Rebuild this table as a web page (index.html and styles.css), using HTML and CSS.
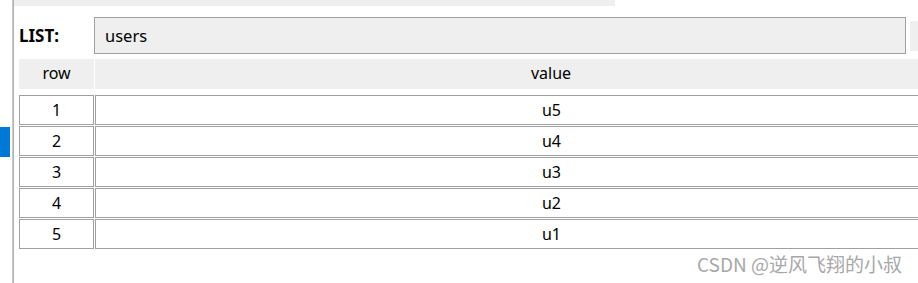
FILE: index.html
```html
<!DOCTYPE html>
<html lang="zh-CN">
<head>
  <meta charset="UTF-8">
  <title>LIST viewer</title>
  <meta name="viewport" content="width=device-width, initial-scale=1.0" />
  <link rel="stylesheet" href="styles.css">
</head>
<body>
  <div class="frame">
    <div class="gutter"><div class="marker"></div></div>
    <div class="divider"></div>
    <div class="panel">
      <div class="topbar"></div>

      <div class="keyrow">
        <label class="keylabel" for="keyName">LIST:</label>
        <div class="keyinput" id="keyName">users</div>
        <div class="keyside"></div>
      </div>

      <div class="grid head">
        <div class="hcell">row</div>
        <div class="hcell wide">value</div>
      </div>

      <div class="grid body">
        <div class="cell">1</div><div class="cell wide">u5</div>
        <div class="cell">2</div><div class="cell wide">u4</div>
        <div class="cell">3</div><div class="cell wide">u3</div>
        <div class="cell">4</div><div class="cell wide">u2</div>
        <div class="cell">5</div><div class="cell wide">u1</div>
      </div>
    </div>
  </div>
  <div class="watermark">CSDN @逆风飞翔的小叔</div>
</body>
</html>
```

FILE: styles.css
```css
body {
  margin: 0;
  padding: 0;
  background: #ffffff;
  color: #000;
  font-family: 'Noto Sans', 'Open Sans', sans-serif;
  font-size: 16px;
  height: 283px;
  overflow: hidden;
  position: relative;
}

.frame {
  display: flex;
  height: 283px;
}

.gutter {
  width: 12px;
  flex: none;
}

.marker {
  margin-top: 127px;
  width: 10px;
  height: 30px;
  background: #0078d7;
}

.divider {
  width: 2px;
  flex: none;
  background: linear-gradient(90deg, #d2d2d2, #a8a8a8);
}

.panel {
  flex: 1;
  min-width: 0;
  overflow: hidden;
}

.topbar {
  width: 601px;
  height: 6px;
  background: #efefef;
}

/* key name row */
.keyrow {
  display: flex;
  align-items: flex-start;
  height: 37px;
  margin-top: 11px;
  padding-left: 5px;
}

.keylabel {
  width: 75px;
  flex: none;
  font-weight: bold;
  font-size: 17px;
  line-height: 37px;
}

.keyinput {
  width: 800px;
  height: 35px;
  flex: none;
  border: 1px solid #a0a0a0;
  background: #efefef;
  padding-left: 10px;
  line-height: 35px;
  font-size: 16.5px;
}

.keyside {
  flex: 1;
  margin: 4px 0 0 4px;
  height: 30px;
  background: #efefef;
}

/* table: the value column runs on past the right edge, so its
   text is pushed right to stay centred on the full column */
.grid {
  display: grid;
  grid-template-columns: 75px 1fr;
  column-gap: 1px;
  row-gap: 1px;
  margin-left: 5px;
}

.head {
  margin-top: 5px;
}

.body {
  margin-top: 6px;
}

.hcell {
  height: 30px;
  line-height: 29px;
  background: #efefef;
  text-align: center;
}

.cell {
  height: 28px;
  line-height: 28px;
  border: 1px solid #a0a0a0;
  text-align: center;
}

.wide {
  padding-left: 89px;
}

.cell.wide {
  border-right: none;
}

.watermark {
  position: absolute;
  right: 16px;
  bottom: 6px;
  font-family: 'Noto Sans CJK SC', 'Noto Sans', sans-serif;
  font-size: 19px;
  color: #a8a8a8;
}
```
